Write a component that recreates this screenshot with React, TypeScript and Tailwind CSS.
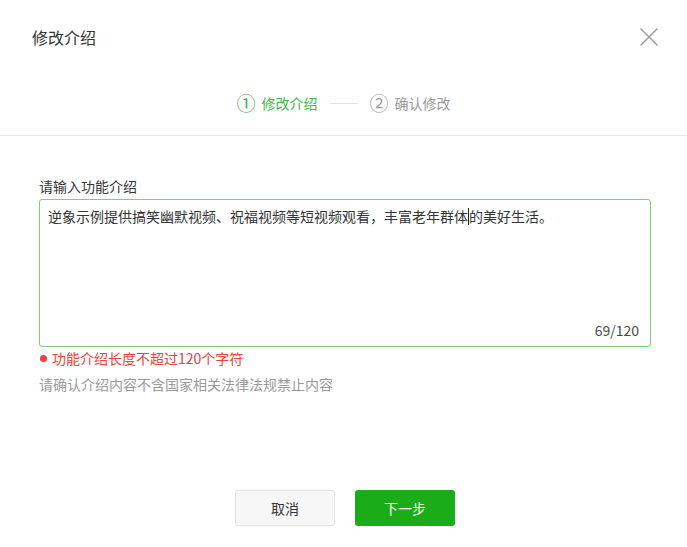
export default function App() {
  return (
    <div
      className="w-[687px] h-[547px] bg-white text-[#353535] text-[14px]"
      style={{ fontFamily: '"Noto Sans CJK SC", "Noto Sans", sans-serif' }}
    >
      {/* header */}
      <div className="h-[74px] flex items-center justify-between pl-8 pr-[29px]">
        <h1 className="text-[16px] leading-[20px] font-normal">修改介绍</h1>
        <button className="text-[#9a9a9a] mt-[-1px]" title="关闭">
          <svg width="18" height="18" viewBox="0 0 18 18" fill="none" stroke="currentColor" strokeWidth="1.4">
            <path d="M0.5 0.5L17.5 17.5M17.5 0.5L0.5 17.5" />
          </svg>
        </button>
      </div>

      {/* steps */}
      <div className="h-[62px] border-b border-[#e7e7eb] pt-[19px] flex items-start justify-center">
        <div className="flex items-center leading-[20px]">
          <span className="flex items-center gap-[6px] text-[#44b549]">
            <span className="text-[19px] leading-[20px]">①</span>
            <span>修改介绍</span>
          </span>
          <span className="mx-[12px] w-[28px] h-[1px] bg-[#e0e2e6]" />
          <span className="flex items-center gap-[6px] text-[#9a9a9a]">
            <span className="text-[19px] leading-[20px]">②</span>
            <span>确认修改</span>
          </span>
        </div>
      </div>

      {/* body */}
      <div className="pl-[39px] pt-[40px]">
        <div className="leading-[20px] text-[#353535]">请输入功能介绍</div>
        <div className="relative mt-[3px] w-[612px] h-[148px] border border-[#7bd173] rounded-[3px]">
          <div className="pl-[8px] pt-[6px] leading-[20px] text-[#353535]">
            逆象示例提供搞笑幽默视频、祝福视频等短视频观看，丰富老年群体
            <span className="inline-block w-px h-[17px] bg-[#222] align-[-3px]" />
            的美好生活。
          </div>
          <span className="absolute right-[11px] bottom-[6px] leading-[20px] text-[#4a4a4a]">
            69/120
          </span>
        </div>
        <div className="mt-[1px] flex items-center leading-[20px] text-[#e64340]">
          <span className="ml-[1px] w-[7px] h-[7px] rounded-full bg-[#e64340]" />
          <span className="ml-[5px]">功能介绍长度不超过120个字符</span>
        </div>
        <div className="mt-[6px] leading-[20px] text-[#9a9a9a]">
          请确认介绍内容不含国家相关法律法规禁止内容
        </div>
      </div>

      {/* footer */}
      <div className="mt-[96px] flex justify-center gap-5 pl-[3px]">
        <button className="w-[100px] h-[36px] rounded-[3px] border border-[#e5e5e5] bg-[#f7f7f7] text-[#353535]">
          取消
        </button>
        <button className="w-[100px] h-[36px] rounded-[3px] bg-[#1aad19] text-white">
          下一步
        </button>
      </div>
    </div>
  );
}
